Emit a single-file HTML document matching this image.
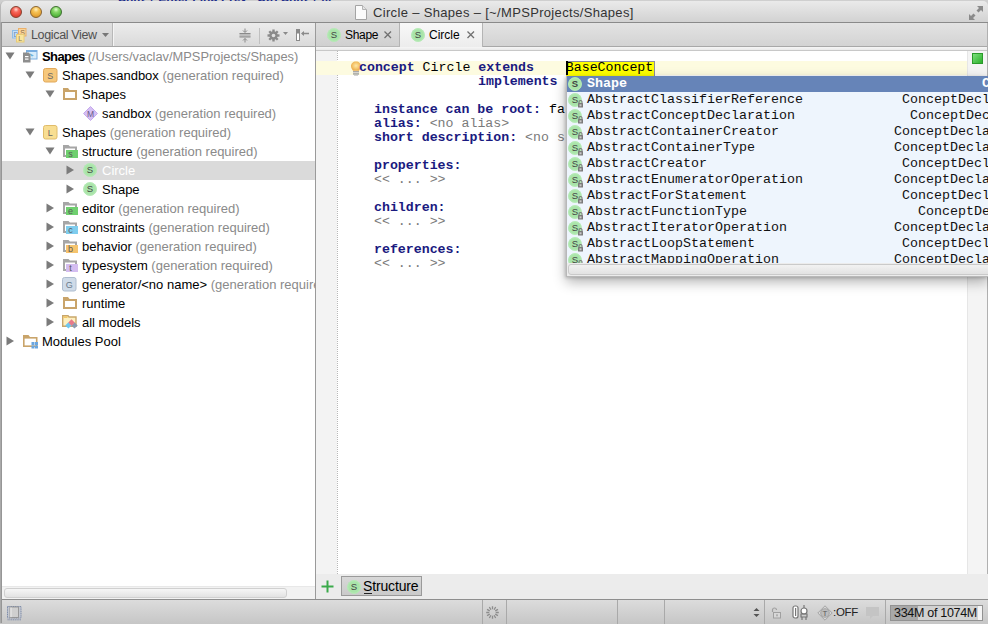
<!DOCTYPE html>
<html><head><meta charset="utf-8">
<style>
*{margin:0;padding:0;box-sizing:border-box}
html,body{width:988px;height:624px;overflow:hidden;background:#cfcfcf;font-family:"Liberation Sans",sans-serif;font-size:13px;color:#000;position:relative}
.a{position:absolute}
#title{position:absolute;left:0;top:1px;width:988px;height:22px;background:linear-gradient(#eaeaea,#d2d2d2);border-bottom:1px solid #8a8a8a;border-radius:5px 5px 0 0;border-left:1px solid #b8b8b8}
.tl{position:absolute;top:5px;width:12px;height:12px;border-radius:50%}
#ttext{position:absolute;left:372px;top:4px;font-size:13px;color:#333;white-space:pre;letter-spacing:0.33px}
#ltb{position:absolute;left:2px;top:23px;width:313px;height:24px;background:linear-gradient(#ececec,#dadada);border-bottom:1px solid #a6a6a6}
#tree{position:absolute;left:2px;top:47px;width:313px;height:540px;background:#fff;overflow:hidden}
.row{position:absolute;left:-2px;width:315px;height:19px;white-space:pre;line-height:19px;font-size:13px}
.g{color:#8a8a8a}
#lscroll{position:absolute;left:2px;top:587px;width:313px;height:12px;background:#f2f2f2}
#divl{position:absolute;left:315px;top:23px;width:1px;height:576px;background:#9a9a9a}
#etb{position:absolute;left:316px;top:23px;width:672px;height:24px;background:linear-gradient(#e3e3e3,#d3d3d3);border-bottom:1px solid #a8a8a8}
.tab{position:absolute;top:0;height:24px;white-space:pre}
#ed{position:absolute;left:316px;top:47px;width:672px;height:527px;background:#fff;overflow:hidden}
.code{position:absolute;font-family:"Liberation Mono",monospace;font-size:13.25px;line-height:14px;white-space:pre;color:#000}
.kw{color:#1a1a80;font-weight:bold}
.gr{color:#7a7a7a}
#popup{position:absolute;left:566px;top:76px;width:422px;height:201px;background:#eef5fd;border-left:1px solid #b8b8b8;border-bottom:1px solid #b8b8b8;box-shadow:0 5px 12px rgba(0,0,0,.3),-1px 1px 3px rgba(0,0,0,.18);overflow:hidden}
.prow{position:absolute;left:0;width:422px;height:16px;font-family:"Liberation Mono",monospace;font-size:13.33px;line-height:16px;white-space:pre;color:#111}
#btabs{position:absolute;left:316px;top:574px;width:672px;height:25px;background:#ececec}
#status{position:absolute;left:0;top:599px;width:988px;height:25px;background:linear-gradient(#dcdcdc,#c6c6c6);border-top:1px solid #8e8e8e}
.sep{position:absolute;top:0;width:1px;height:25px;background:#a9a9a9}
</style></head><body>
<div class="a" style="left:118px;top:0;width:230px;height:2px;color:#1a2a8a;font-size:12px;overflow:hidden"><div style="position:absolute;top:-9px;left:0;font-weight:bold;white-space:pre">Shift + Enter Find Prev   Ctrl Shift + ...</div></div>
<div id="title">
 <div class="tl" style="left:9px;background:radial-gradient(circle at 50% 25%,#ffd8d0 0,#f86a5e 30%,#e84838 65%,#c83028 100%);border:1px solid #86402e"></div>
 <div class="tl" style="left:29px;background:radial-gradient(circle at 50% 25%,#fff0c0 0,#f6c458 30%,#e8a838 65%,#c88420 100%);border:1px solid #8a6430"></div>
 <div class="tl" style="left:49px;background:radial-gradient(circle at 50% 25%,#e0ffd0 0,#8ad86a 30%,#5cbc44 65%,#3a9a2a 100%);border:1px solid #3e6e30"></div>
 <svg class="a" style="left:353px;top:3px" width="14" height="16" viewBox="0 0 14 16"><path d="M1.5 1.5H8.5L12.5 5.5V15.5H1.5Z" fill="#fbfbfb" stroke="#a4a4a4"/><path d="M8.5 1.5V5.5H12.5" fill="#e4e4e4" stroke="#b4b4b4"/></svg>
 <div id="ttext">Circle – Shapes – [~/MPSProjects/Shapes]</div>
 <svg class="a" style="left:967px;top:4px" width="16" height="16" viewBox="0 0 16 16"><path d="M9 1H15V7L13 5L10.5 7.5L8.5 5.5L11 3Z" fill="#8a8a8a"/><path d="M7 15H1V9L3 11L5.5 8.5L7.5 10.5L5 13Z" fill="#8a8a8a"/></svg>
</div>
<div id="ltb">
 <div class="a" style="left:0;top:0;width:111px;height:23px;background:linear-gradient(#e0e0e0,#d0d0d0);border-right:1px solid #b8b8b8;box-shadow:1px 0 0 #f4f4f4"></div>
 <svg class="a" style="left:9px;top:4px" width="18" height="17" viewBox="0 0 18 17"><rect x="1.5" y="3.5" width="7.5" height="7.5" fill="#c4e0fa" stroke="#8fbde8"/><text x="5" y="10" font-family="Liberation Sans" font-size="7" text-anchor="middle" fill="#6a8ab0">D</text><rect x="7.5" y="1.5" width="7.5" height="7.5" fill="#f9d49a" stroke="#eab06a"/><text x="11.5" y="8" font-family="Liberation Sans" font-size="7" text-anchor="middle" fill="#8a6a40">S</text><rect x="5.5" y="7.5" width="7.5" height="7.5" fill="#fae59e" stroke="#e8cc78"/><text x="9.2" y="14" font-family="Liberation Sans" font-size="7" text-anchor="middle" fill="#8a7a50">L</text></svg>
 <div class="a" style="left:29px;top:5px;font-size:12.5px;color:#505050;letter-spacing:-0.35px">Logical View</div>
 <svg class="a" style="left:100px;top:10px" width="8" height="5"><path d="M0 0H7L3.5 4Z" fill="#777"/></svg>
 <svg class="a" style="left:237px;top:5px" width="13" height="15" viewBox="0 0 13 15"><rect x="0.5" y="5.5" width="11" height="3.5" fill="#bcbcbc"/><path d="M0.5 5.5H11.5M0.5 9H11.5" stroke="#8a8a8a"/><path d="M6 0.5V4M4 2.5L6 4.5L8 2.5M6 14.5V10.5M4 12.5L6 10.5L8 12.5" stroke="#8a8a8a" fill="none"/></svg>
 <div class="a" style="left:257px;top:5px;width:1px;height:16px;background:#c0c0c0"></div>
 <svg class="a" style="left:265px;top:6px" width="14" height="14" viewBox="0 0 14 14"><g fill="#8a8a8a"><circle cx="6.5" cy="6.5" r="4.2"/><rect x="5.3" y="0.5" width="2.4" height="12"/><rect x="0.5" y="5.3" width="12" height="2.4"/><rect x="5.3" y="0.5" width="2.4" height="12" transform="rotate(45 6.5 6.5)"/><rect x="5.3" y="0.5" width="2.4" height="12" transform="rotate(-45 6.5 6.5)"/></g><circle cx="6.5" cy="6.5" r="1.8" fill="#e0e0e0"/></svg>
 <svg class="a" style="left:281px;top:9px" width="6" height="4"><path d="M0 0H5L2.5 3Z" fill="#8a8a8a"/></svg>
 <svg class="a" style="left:293px;top:6px" width="16" height="13" viewBox="0 0 16 13"><rect x="1.5" y="0.5" width="3" height="11" fill="#fff" stroke="#8a8a8a"/><rect x="1.5" y="0.5" width="3" height="4" fill="#8a8a8a"/><path d="M7 4.5H14" stroke="#8a8a8a" stroke-width="1.5"/><path d="M6 4.5L9 2V7Z" fill="#8a8a8a"/></svg>
</div>
<div id="tree">
<div class="row" style="top:0px"><svg class="a" style="left:5px;top:5px" width="10" height="8"><path d="M0.5 0.5H9.5L5 7.5Z" fill="#7b7b7b"/></svg><svg class="a" style="left:22px;top:2px" width="17" height="16" viewBox="0 0 17 16"><rect x="4.5" y="1.5" width="10.5" height="8.5" fill="#d8ecfa" stroke="#7aaee0"/><rect x="4.5" y="1.5" width="10.5" height="1.5" fill="#7aaee0"/><path d="M8 4.5L12 6.5L10 7L11 9L8 5Z" fill="#5ab0e0"/><path d="M1 3.5H6.5L8.5 5.5V13.5H1Z" fill="#8e8e8e"/><rect x="3" y="7" width="3.5" height="1.2" fill="#fff"/><rect x="3" y="9.5" width="3.5" height="1.2" fill="#fff"/></svg><span class="a" style="left:42px;top:0;color:#000;font-weight:bold;letter-spacing:-0.6px">Shapes <span class="g" style="font-weight:normal;letter-spacing:0;font-size:12.85px">(/Users/vaclav/MPSProjects/Shapes)</span></span></div>
<div class="row" style="top:19px"><svg class="a" style="left:25px;top:5px" width="10" height="8"><path d="M0.5 0.5H9.5L5 7.5Z" fill="#7b7b7b"/></svg><svg class="a" style="left:43px;top:2px" width="15" height="15" viewBox="0 0 15 15"><rect x="0.5" y="0.5" width="13.5" height="13.5" rx="2" fill="#f6c87c" stroke="#e2a95a"/><text x="7.2" y="11" font-family="Liberation Sans" font-size="9" text-anchor="middle" fill="#666">S</text></svg><span class="a" style="left:62px;top:0;color:#000">Shapes.sandbox <span class="g" style="font-weight:normal;letter-spacing:0">(generation required)</span></span></div>
<div class="row" style="top:38px"><svg class="a" style="left:45px;top:5px" width="10" height="8"><path d="M0.5 0.5H9.5L5 7.5Z" fill="#7b7b7b"/></svg><svg class="a" style="left:62px;top:2px" width="16" height="14" viewBox="0 0 16 14"><path d="M1 1h5l1.5 2H15V13H1Z" fill="#c9a46a"/><rect x="3" y="5" width="10" height="6" fill="#fff"/></svg><span class="a" style="left:82px;top:0;color:#000">Shapes</span></div>
<div class="row" style="top:57px"><svg class="a" style="left:83px;top:2px" width="16" height="16" viewBox="0 0 16 16"><path d="M7.5 0.5L14.5 7.5L7.5 14.5L0.5 7.5Z" fill="#d6c0f4" stroke="#c4a8ec"/><text x="7.5" y="10.8" font-family="Liberation Sans" font-size="8.5" text-anchor="middle" fill="#6a5a88">M</text></svg><span class="a" style="left:102px;top:0;color:#000">sandbox <span class="g" style="font-weight:normal;letter-spacing:0">(generation required)</span></span></div>
<div class="row" style="top:76px"><svg class="a" style="left:25px;top:5px" width="10" height="8"><path d="M0.5 0.5H9.5L5 7.5Z" fill="#7b7b7b"/></svg><svg class="a" style="left:43px;top:2px" width="15" height="15" viewBox="0 0 15 15"><rect x="0.5" y="0.5" width="13.5" height="13.5" rx="2" fill="#f8de92" stroke="#e0bc6a"/><text x="7.2" y="11" font-family="Liberation Sans" font-size="9" text-anchor="middle" fill="#666">L</text></svg><span class="a" style="left:62px;top:0;color:#000">Shapes <span class="g" style="font-weight:normal;letter-spacing:0">(generation required)</span></span></div>
<div class="row" style="top:95px"><svg class="a" style="left:45px;top:5px" width="10" height="8"><path d="M0.5 0.5H9.5L5 7.5Z" fill="#7b7b7b"/></svg><svg class="a" style="left:63px;top:3px" width="17" height="15" viewBox="0 0 17 15"><path d="M0 0h5.5l1.5 1.5H14v3.5H12V3.5H2V10H3V12H0Z" fill="#a6a6a6"/><rect x="3" y="5" width="12" height="8" fill="#6fd06f"/><text x="7.5" y="12" font-family="Liberation Sans" font-size="9" text-anchor="middle" fill="#5a5a5a">s</text></svg><span class="a" style="left:82px;top:0;color:#000">structure <span class="g" style="font-weight:normal;letter-spacing:0">(generation required)</span></span></div>
<div class="row" style="top:114px;background:#dadada"><svg class="a" style="left:66px;top:4px" width="9" height="10"><path d="M0.5 0.5V9.5L8 5Z" fill="#7b7b7b"/></svg><svg class="a" style="left:83px;top:2px" width="16" height="16" viewBox="0 0 16 16"><circle cx="7" cy="7" r="6.8" fill="#a9e4a9"/><circle cx="7" cy="7" r="6.3" fill="none" stroke="#b9ecb9" stroke-width="1"/><text x="7" y="10.2" font-family="Liberation Sans" font-size="9.5" text-anchor="middle" fill="#444">S</text></svg><span class="a" style="left:102px;top:0;color:#fff">Circle</span></div>
<div class="row" style="top:133px"><svg class="a" style="left:66px;top:4px" width="9" height="10"><path d="M0.5 0.5V9.5L8 5Z" fill="#7b7b7b"/></svg><svg class="a" style="left:83px;top:2px" width="16" height="16" viewBox="0 0 16 16"><circle cx="7" cy="7" r="6.8" fill="#a9e4a9"/><circle cx="7" cy="7" r="6.3" fill="none" stroke="#b9ecb9" stroke-width="1"/><text x="7" y="10.2" font-family="Liberation Sans" font-size="9.5" text-anchor="middle" fill="#444">S</text></svg><span class="a" style="left:102px;top:0;color:#000">Shape</span></div>
<div class="row" style="top:152px"><svg class="a" style="left:46px;top:4px" width="9" height="10"><path d="M0.5 0.5V9.5L8 5Z" fill="#7b7b7b"/></svg><svg class="a" style="left:63px;top:3px" width="17" height="15" viewBox="0 0 17 15"><path d="M0 0h5.5l1.5 1.5H14v3.5H12V3.5H2V10H3V12H0Z" fill="#a6a6a6"/><rect x="3" y="5" width="12" height="8" fill="#6fd06f"/><text x="7.5" y="12" font-family="Liberation Sans" font-size="9" text-anchor="middle" fill="#5a5a5a">e</text></svg><span class="a" style="left:82px;top:0;color:#000">editor <span class="g" style="font-weight:normal;letter-spacing:0">(generation required)</span></span></div>
<div class="row" style="top:171px"><svg class="a" style="left:46px;top:4px" width="9" height="10"><path d="M0.5 0.5V9.5L8 5Z" fill="#7b7b7b"/></svg><svg class="a" style="left:63px;top:3px" width="17" height="15" viewBox="0 0 17 15"><path d="M0 0h5.5l1.5 1.5H14v3.5H12V3.5H2V10H3V12H0Z" fill="#a6a6a6"/><rect x="3" y="5" width="12" height="8" fill="#7fcdee"/><text x="7.5" y="12" font-family="Liberation Sans" font-size="9" text-anchor="middle" fill="#5a5a5a">c</text></svg><span class="a" style="left:82px;top:0;color:#000">constraints <span class="g" style="font-weight:normal;letter-spacing:0">(generation required)</span></span></div>
<div class="row" style="top:190px"><svg class="a" style="left:46px;top:4px" width="9" height="10"><path d="M0.5 0.5V9.5L8 5Z" fill="#7b7b7b"/></svg><svg class="a" style="left:63px;top:3px" width="17" height="15" viewBox="0 0 17 15"><path d="M0 0h5.5l1.5 1.5H14v3.5H12V3.5H2V10H3V12H0Z" fill="#a6a6a6"/><rect x="3" y="5" width="12" height="8" fill="#f5c46e"/><text x="7.5" y="12" font-family="Liberation Sans" font-size="9" text-anchor="middle" fill="#5a5a5a">b</text></svg><span class="a" style="left:82px;top:0;color:#000">behavior <span class="g" style="font-weight:normal;letter-spacing:0">(generation required)</span></span></div>
<div class="row" style="top:209px"><svg class="a" style="left:46px;top:4px" width="9" height="10"><path d="M0.5 0.5V9.5L8 5Z" fill="#7b7b7b"/></svg><svg class="a" style="left:63px;top:3px" width="17" height="15" viewBox="0 0 17 15"><path d="M0 0h5.5l1.5 1.5H14v3.5H12V3.5H2V10H3V12H0Z" fill="#a6a6a6"/><rect x="3" y="5" width="12" height="8" fill="#d4bdf0"/><text x="7.5" y="12" font-family="Liberation Sans" font-size="9" text-anchor="middle" fill="#5a5a5a">t</text></svg><span class="a" style="left:82px;top:0;color:#000">typesystem <span class="g" style="font-weight:normal;letter-spacing:0">(generation required)</span></span></div>
<div class="row" style="top:228px"><svg class="a" style="left:46px;top:4px" width="9" height="10"><path d="M0.5 0.5V9.5L8 5Z" fill="#7b7b7b"/></svg><svg class="a" style="left:62px;top:2px" width="15" height="15" viewBox="0 0 15 15"><rect x="0.5" y="0.5" width="13.5" height="13.5" rx="2" fill="#cfdbe8" stroke="#aebdd0"/><text x="7.2" y="11" font-family="Liberation Sans" font-size="9" text-anchor="middle" fill="#6a7a8a">G</text></svg><span class="a" style="left:82px;top:0;color:#000">generator/&lt;no name&gt; <span class="g" style="font-weight:normal;letter-spacing:0">(generation required)</span></span></div>
<div class="row" style="top:247px"><svg class="a" style="left:46px;top:4px" width="9" height="10"><path d="M0.5 0.5V9.5L8 5Z" fill="#7b7b7b"/></svg><svg class="a" style="left:62px;top:2px" width="16" height="14" viewBox="0 0 16 14"><path d="M1 1h5l1.5 2H15V13H1Z" fill="#c9a46a"/><rect x="3" y="5" width="10" height="6" fill="#fff"/></svg><span class="a" style="left:82px;top:0;color:#000">runtime</span></div>
<div class="row" style="top:266px"><svg class="a" style="left:46px;top:4px" width="9" height="10"><path d="M0.5 0.5V9.5L8 5Z" fill="#7b7b7b"/></svg><svg class="a" style="left:62px;top:2px" width="17" height="16" viewBox="0 0 17 16"><path d="M0.7 0.7H6L7 2H14V11.3H0.7Z" fill="#fdf0c0" stroke="#c9a66a" stroke-width="1.4"/><rect x="1.5" y="1.5" width="4" height="1.5" fill="#f5c860"/><path d="M6.4 7.2L9.6 10.4L6.4 13.6L3.2 10.4Z" fill="#6ec6ee"/><path d="M12.5 7.2L15.7 10.4L12.5 13.6L9.3 10.4Z" fill="#8c9ab0"/><path d="M9.5 4.3L12.7 7.5L9.5 10.7L6.3 7.5Z" fill="#e87a8a"/></svg><span class="a" style="left:82px;top:0;color:#000">all models</span></div>
<div class="row" style="top:285px"><svg class="a" style="left:6px;top:4px" width="9" height="10"><path d="M0.5 0.5V9.5L8 5Z" fill="#7b7b7b"/></svg><svg class="a" style="left:23px;top:3px" width="17" height="16" viewBox="0 0 17 16"><path d="M0 0h5.5l1.5 2H14.5V12H0Z" fill="#c9a46a"/><rect x="1.6" y="3.6" width="11.3" height="6.8" fill="#fff"/><rect x="8.5" y="7" width="3" height="3" fill="#6aa6e0"/><rect x="12" y="7" width="3" height="3" fill="#6aa6e0"/><rect x="8.5" y="10.5" width="3" height="3" fill="#6aa6e0"/><rect x="12" y="10.5" width="3" height="3" fill="#6aa6e0"/></svg><span class="a" style="left:42px;top:0;color:#000">Modules Pool</span></div>
</div>
<div id="lscroll"><div class="a" style="left:2px;top:1px;width:283px;height:10px;border-radius:3px;background:linear-gradient(#f6f6f6,#e2e2e2);border:1px solid #d0d0d0"></div></div>
<div id="divl"></div>
<div id="etb">
 <div class="tab" style="left:0;width:84px;background:linear-gradient(#dedede,#d0d0d0);border-right:1px solid #b4b4b4;border-bottom:1px solid #b8b8b8"><svg class="a" style="left:11px;top:5px" width="16" height="16" viewBox="0 0 16 16"><circle cx="7" cy="7" r="6.8" fill="#a9e4a9"/><circle cx="7" cy="7" r="6.3" fill="none" stroke="#b9ecb9" stroke-width="1"/><text x="7" y="10.2" font-family="Liberation Sans" font-size="9.5" text-anchor="middle" fill="#444">S</text></svg><span class="a" style="left:29px;top:5px;font-size:12px;letter-spacing:-0.3px">Shape</span><svg class="a" style="left:68px;top:8px" width="8" height="8"><path d="M0.5 0.5L7 7M7 0.5L0.5 7" stroke="#707070" stroke-width="1.3"/></svg></div>
 <div class="tab" style="left:84px;width:83px;height:25px;background:linear-gradient(#f8f8f8,#ececec);border-right:1px solid #b4b4b4"><svg class="a" style="left:11px;top:5px" width="16" height="16" viewBox="0 0 16 16"><circle cx="7" cy="7" r="6.8" fill="#a9e4a9"/><circle cx="7" cy="7" r="6.3" fill="none" stroke="#b9ecb9" stroke-width="1"/><text x="7" y="10.2" font-family="Liberation Sans" font-size="9.5" text-anchor="middle" fill="#444">S</text></svg><span class="a" style="left:29px;top:5px;font-size:12px">Circle</span><svg class="a" style="left:67px;top:8px" width="8" height="8"><path d="M0.5 0.5L7 7M7 0.5L0.5 7" stroke="#707070" stroke-width="1.3"/></svg></div>
</div>
<div id="ed">
 <div class="a" style="left:0;top:0;width:672px;height:3px;background:linear-gradient(#f6f6f6,#eaeaea)"></div><div class="a" style="left:0;top:3px;width:672px;height:1px;background:#c8c8c8"></div>
 <div class="a" style="left:0;top:4px;width:21px;height:523px;background:#f3f3f3"></div>
 <div class="a" style="left:21px;top:4px;width:0;height:523px;border-left:1px dotted #b8b8b8"></div>
 <div class="a" style="left:0;top:14px;width:651px;height:14px;background:#fdfbe0"></div>
 <div class="a" style="left:651px;top:4px;width:21px;height:523px;background:#f4f4f4;border-left:1px solid #e6e6e6"></div>
 <div class="a" style="left:656px;top:6px;width:11px;height:11px;background:linear-gradient(135deg,#7ce07c,#2cb02c);border:1px solid #2a9a2a"></div>
 <svg class="a" style="left:34px;top:13px" width="13" height="17" viewBox="0 0 13 17"><defs><radialGradient id="bg1" cx="50%" cy="45%" r="55%"><stop offset="0" stop-color="#fde7a8"/><stop offset="0.6" stop-color="#f5c56a"/><stop offset="1" stop-color="#e9a84a"/></radialGradient></defs><path d="M6 1.5C3 1.5 1 3.6 1 6.3C1 8.3 2.4 9.4 3 10.8H9C9.6 9.4 11 8.3 11 6.3C11 3.6 9 1.5 6 1.5Z" fill="url(#bg1)"/><rect x="3" y="11" width="6" height="1.3" fill="#a8a8a8"/><rect x="3" y="12.3" width="6" height="1" fill="#d0d0d0"/><rect x="3" y="13.3" width="6" height="1.3" fill="#9a9a9a"/><rect x="4" y="14.6" width="4" height="1" fill="#b8b8b8"/></svg>
 <div class="a" style="left:250px;top:14px;width:89px;height:15px;background:#ffff00;border-top:1px solid #8c8ca0;border-right:1px solid #8c8ca0"></div>
 <div class="code" style="left:43px;top:14px"><span class="kw">concept</span> Circle <span class="kw">extends</span>    BaseConcept</div>
 <div class="a" style="left:250px;top:14px;width:1.5px;height:14px;background:#000"></div>
 <div class="code" style="left:162px;top:28px"><span class="kw">implements</span></div>
 <div class="code" style="left:58px;top:56px"><span class="kw">instance can be root:</span> fa
<span class="kw">alias:</span> <span class="gr">&lt;no alias&gt;</span>
<span class="kw">short description:</span> <span class="gr">&lt;no s</span>

<span class="kw">properties:</span>
<span class="gr">&lt;&lt; ... &gt;&gt;</span>

<span class="kw">children:</span>
<span class="gr">&lt;&lt; ... &gt;&gt;</span>

<span class="kw">references:</span>
<span class="gr">&lt;&lt; ... &gt;&gt;</span></div>
</div>
<div class="a" style="left:987px;top:23px;width:1px;height:576px;background:#b0b0b0"></div>
<div id="popup">
<div class="prow" style="top:0;background:#6684b8;color:#fff;font-weight:bold"><svg class="a" style="left:1px;top:1px" width="16" height="16" viewBox="0 0 16 16"><circle cx="7" cy="7" r="6.8" fill="#a9e4a9"/><circle cx="7" cy="7" r="6.3" fill="none" stroke="#b9ecb9" stroke-width="1"/><text x="7" y="10.2" font-family="Liberation Sans" font-size="9.5" text-anchor="middle" fill="#444">S</text></svg><span class="a" style="left:20px">Shape</span><span class="a" style="left:415px">C</span></div>
<div class="prow" style="top:16px"><svg class="a" style="left:1px;top:1px" width="16" height="16" viewBox="0 0 16 16"><circle cx="7" cy="7" r="6.8" fill="#a9e4a9"/><circle cx="7" cy="7" r="6.3" fill="none" stroke="#b9ecb9" stroke-width="1"/><text x="7" y="10.2" font-family="Liberation Sans" font-size="9.5" text-anchor="middle" fill="#444">S</text><rect x="10" y="10" width="5" height="4.5" rx="0.5" fill="#7a7a7a"/><rect x="11.5" y="11.3" width="2" height="2" fill="#c8c8c8"/><path d="M11 10.2V9a1.5 1.5 0 0 1 3 0v1.2" fill="none" stroke="#7a7a7a" stroke-width="1.1"/></svg><span class="a" style="left:20px">AbstractClassifierReference</span><span class="a" style="left:335px">ConceptDeclaration</span></div>
<div class="prow" style="top:32px"><svg class="a" style="left:1px;top:1px" width="16" height="16" viewBox="0 0 16 16"><circle cx="7" cy="7" r="6.8" fill="#a9e4a9"/><circle cx="7" cy="7" r="6.3" fill="none" stroke="#b9ecb9" stroke-width="1"/><text x="7" y="10.2" font-family="Liberation Sans" font-size="9.5" text-anchor="middle" fill="#444">S</text><rect x="10" y="10" width="5" height="4.5" rx="0.5" fill="#7a7a7a"/><rect x="11.5" y="11.3" width="2" height="2" fill="#c8c8c8"/><path d="M11 10.2V9a1.5 1.5 0 0 1 3 0v1.2" fill="none" stroke="#7a7a7a" stroke-width="1.1"/></svg><span class="a" style="left:20px">AbstractConceptDeclaration</span><span class="a" style="left:343px">ConceptDeclaration</span></div>
<div class="prow" style="top:48px"><svg class="a" style="left:1px;top:1px" width="16" height="16" viewBox="0 0 16 16"><circle cx="7" cy="7" r="6.8" fill="#a9e4a9"/><circle cx="7" cy="7" r="6.3" fill="none" stroke="#b9ecb9" stroke-width="1"/><text x="7" y="10.2" font-family="Liberation Sans" font-size="9.5" text-anchor="middle" fill="#444">S</text><rect x="10" y="10" width="5" height="4.5" rx="0.5" fill="#7a7a7a"/><rect x="11.5" y="11.3" width="2" height="2" fill="#c8c8c8"/><path d="M11 10.2V9a1.5 1.5 0 0 1 3 0v1.2" fill="none" stroke="#7a7a7a" stroke-width="1.1"/></svg><span class="a" style="left:20px">AbstractContainerCreator</span><span class="a" style="left:327px">ConceptDeclaration</span></div>
<div class="prow" style="top:64px"><svg class="a" style="left:1px;top:1px" width="16" height="16" viewBox="0 0 16 16"><circle cx="7" cy="7" r="6.8" fill="#a9e4a9"/><circle cx="7" cy="7" r="6.3" fill="none" stroke="#b9ecb9" stroke-width="1"/><text x="7" y="10.2" font-family="Liberation Sans" font-size="9.5" text-anchor="middle" fill="#444">S</text><rect x="10" y="10" width="5" height="4.5" rx="0.5" fill="#7a7a7a"/><rect x="11.5" y="11.3" width="2" height="2" fill="#c8c8c8"/><path d="M11 10.2V9a1.5 1.5 0 0 1 3 0v1.2" fill="none" stroke="#7a7a7a" stroke-width="1.1"/></svg><span class="a" style="left:20px">AbstractContainerType</span><span class="a" style="left:327px">ConceptDeclaration</span></div>
<div class="prow" style="top:80px"><svg class="a" style="left:1px;top:1px" width="16" height="16" viewBox="0 0 16 16"><circle cx="7" cy="7" r="6.8" fill="#a9e4a9"/><circle cx="7" cy="7" r="6.3" fill="none" stroke="#b9ecb9" stroke-width="1"/><text x="7" y="10.2" font-family="Liberation Sans" font-size="9.5" text-anchor="middle" fill="#444">S</text><rect x="10" y="10" width="5" height="4.5" rx="0.5" fill="#7a7a7a"/><rect x="11.5" y="11.3" width="2" height="2" fill="#c8c8c8"/><path d="M11 10.2V9a1.5 1.5 0 0 1 3 0v1.2" fill="none" stroke="#7a7a7a" stroke-width="1.1"/></svg><span class="a" style="left:20px">AbstractCreator</span><span class="a" style="left:335px">ConceptDeclaration</span></div>
<div class="prow" style="top:96px"><svg class="a" style="left:1px;top:1px" width="16" height="16" viewBox="0 0 16 16"><circle cx="7" cy="7" r="6.8" fill="#a9e4a9"/><circle cx="7" cy="7" r="6.3" fill="none" stroke="#b9ecb9" stroke-width="1"/><text x="7" y="10.2" font-family="Liberation Sans" font-size="9.5" text-anchor="middle" fill="#444">S</text><rect x="10" y="10" width="5" height="4.5" rx="0.5" fill="#7a7a7a"/><rect x="11.5" y="11.3" width="2" height="2" fill="#c8c8c8"/><path d="M11 10.2V9a1.5 1.5 0 0 1 3 0v1.2" fill="none" stroke="#7a7a7a" stroke-width="1.1"/></svg><span class="a" style="left:20px">AbstractEnumeratorOperation</span><span class="a" style="left:327px">ConceptDeclaration</span></div>
<div class="prow" style="top:112px"><svg class="a" style="left:1px;top:1px" width="16" height="16" viewBox="0 0 16 16"><circle cx="7" cy="7" r="6.8" fill="#a9e4a9"/><circle cx="7" cy="7" r="6.3" fill="none" stroke="#b9ecb9" stroke-width="1"/><text x="7" y="10.2" font-family="Liberation Sans" font-size="9.5" text-anchor="middle" fill="#444">S</text><rect x="10" y="10" width="5" height="4.5" rx="0.5" fill="#7a7a7a"/><rect x="11.5" y="11.3" width="2" height="2" fill="#c8c8c8"/><path d="M11 10.2V9a1.5 1.5 0 0 1 3 0v1.2" fill="none" stroke="#7a7a7a" stroke-width="1.1"/></svg><span class="a" style="left:20px">AbstractForStatement</span><span class="a" style="left:335px">ConceptDeclaration</span></div>
<div class="prow" style="top:128px"><svg class="a" style="left:1px;top:1px" width="16" height="16" viewBox="0 0 16 16"><circle cx="7" cy="7" r="6.8" fill="#a9e4a9"/><circle cx="7" cy="7" r="6.3" fill="none" stroke="#b9ecb9" stroke-width="1"/><text x="7" y="10.2" font-family="Liberation Sans" font-size="9.5" text-anchor="middle" fill="#444">S</text><rect x="10" y="10" width="5" height="4.5" rx="0.5" fill="#7a7a7a"/><rect x="11.5" y="11.3" width="2" height="2" fill="#c8c8c8"/><path d="M11 10.2V9a1.5 1.5 0 0 1 3 0v1.2" fill="none" stroke="#7a7a7a" stroke-width="1.1"/></svg><span class="a" style="left:20px">AbstractFunctionType</span><span class="a" style="left:351px">ConceptDeclaration</span></div>
<div class="prow" style="top:144px"><svg class="a" style="left:1px;top:1px" width="16" height="16" viewBox="0 0 16 16"><circle cx="7" cy="7" r="6.8" fill="#a9e4a9"/><circle cx="7" cy="7" r="6.3" fill="none" stroke="#b9ecb9" stroke-width="1"/><text x="7" y="10.2" font-family="Liberation Sans" font-size="9.5" text-anchor="middle" fill="#444">S</text><rect x="10" y="10" width="5" height="4.5" rx="0.5" fill="#7a7a7a"/><rect x="11.5" y="11.3" width="2" height="2" fill="#c8c8c8"/><path d="M11 10.2V9a1.5 1.5 0 0 1 3 0v1.2" fill="none" stroke="#7a7a7a" stroke-width="1.1"/></svg><span class="a" style="left:20px">AbstractIteratorOperation</span><span class="a" style="left:327px">ConceptDeclaration</span></div>
<div class="prow" style="top:160px"><svg class="a" style="left:1px;top:1px" width="16" height="16" viewBox="0 0 16 16"><circle cx="7" cy="7" r="6.8" fill="#a9e4a9"/><circle cx="7" cy="7" r="6.3" fill="none" stroke="#b9ecb9" stroke-width="1"/><text x="7" y="10.2" font-family="Liberation Sans" font-size="9.5" text-anchor="middle" fill="#444">S</text><rect x="10" y="10" width="5" height="4.5" rx="0.5" fill="#7a7a7a"/><rect x="11.5" y="11.3" width="2" height="2" fill="#c8c8c8"/><path d="M11 10.2V9a1.5 1.5 0 0 1 3 0v1.2" fill="none" stroke="#7a7a7a" stroke-width="1.1"/></svg><span class="a" style="left:20px">AbstractLoopStatement</span><span class="a" style="left:335px">ConceptDeclaration</span></div>
<div class="prow" style="top:176px"><svg class="a" style="left:1px;top:1px" width="16" height="16" viewBox="0 0 16 16"><circle cx="7" cy="7" r="6.8" fill="#a9e4a9"/><circle cx="7" cy="7" r="6.3" fill="none" stroke="#b9ecb9" stroke-width="1"/><text x="7" y="10.2" font-family="Liberation Sans" font-size="9.5" text-anchor="middle" fill="#444">S</text><rect x="10" y="10" width="5" height="4.5" rx="0.5" fill="#7a7a7a"/><rect x="11.5" y="11.3" width="2" height="2" fill="#c8c8c8"/><path d="M11 10.2V9a1.5 1.5 0 0 1 3 0v1.2" fill="none" stroke="#7a7a7a" stroke-width="1.1"/></svg><span class="a" style="left:20px">AbstractMappingOperation</span><span class="a" style="left:327px">ConceptDeclaration</span></div>
 <div class="a" style="left:0;top:187px;width:422px;height:14px;background:#ececec"><div class="a" style="left:1px;top:1px;width:424px;height:11px;border-radius:3px;background:linear-gradient(#f2f2f2,#e2e2e2);border:1px solid #cacaca"></div></div>
</div>
<div id="btabs">
 <svg class="a" style="left:5px;top:6px" width="13" height="13" viewBox="0 0 13 13"><path d="M6.5 0.5V12.5M0.5 6.5H12.5" stroke="#3aaa4a" stroke-width="2"/></svg>
 <div class="a" style="left:25px;top:2px;width:81px;height:20px;background:linear-gradient(#d8d8d8,#cacaca);border:1px solid #9a9a9a"><svg class="a" style="left:5px;top:3px" width="16" height="16" viewBox="0 0 16 16"><circle cx="7" cy="7" r="6.8" fill="#a9e4a9"/><circle cx="7" cy="7" r="6.3" fill="none" stroke="#b9ecb9" stroke-width="1"/><text x="7" y="10.2" font-family="Liberation Sans" font-size="9.5" text-anchor="middle" fill="#444">S</text></svg><span class="a" style="left:21px;top:1px;font-size:14px;letter-spacing:-0.15px">Structure</span><div class="a" style="left:22px;top:16px;width:8px;height:1px;background:#222"></div></div>
</div>
<div id="lbottom" class="a" style="left:2px;top:586px;width:313px;height:1px;background:#e8e8e8"></div>
<div id="status">
 <svg class="a" style="left:7px;top:6px" width="15" height="15" viewBox="0 0 15 15"><rect x="0.5" y="0.5" width="13.5" height="11.5" fill="#c4c8d0" stroke="#7c8aa8" stroke-dasharray="1.2 0.6"/><rect x="3" y="1" width="8.5" height="10.5" fill="#cfcfcf" stroke="#8a8a8a" stroke-width="0.8"/><rect x="3.4" y="1.4" width="1" height="9.8" fill="#f4f4f4"/><path d="M0.5 13.8H14" stroke="#7c8aa8" stroke-dasharray="1.2 0.6"/></svg>
 <div class="sep" style="left:482px"></div>
 <svg class="a" style="left:485px;top:5px" width="15" height="15" viewBox="0 0 15 15"><path d="M10.70 7.50L13.80 7.50M10.27 9.10L12.96 10.65M9.10 10.27L10.65 12.96M7.50 10.70L7.50 13.80M5.90 10.27L4.35 12.96M4.73 9.10L2.04 10.65M4.30 7.50L1.20 7.50M4.73 5.90L2.04 4.35M5.90 4.73L4.35 2.04M7.50 4.30L7.50 1.20M9.10 4.73L10.65 2.04M10.27 5.90L12.96 4.35" stroke="#8c8c8c" stroke-width="1.3"/></svg>
 <div class="sep" style="left:506px"></div>
 <div class="sep" style="left:617px"></div>
 <div class="sep" style="left:664px"></div>
 <svg class="a" style="left:753px;top:7px" width="7" height="11"><path d="M0.5 4L3.5 1L6.5 4ZM0.5 7L3.5 10L6.5 7Z" fill="#555"/></svg>
 <div class="sep" style="left:764px"></div>
 <svg class="a" style="left:770px;top:7px" width="12" height="12" viewBox="0 0 12 12"><path d="M2.5 5V3a2 2 0 0 1 4 0" fill="none" stroke="#a0a0a0" stroke-width="1.2"/><rect x="3.5" y="5.5" width="7" height="5.5" fill="#d8d8d8" stroke="#a0a0a0"/><rect x="6.3" y="7.3" width="1.4" height="2" fill="#a0a0a0"/></svg>
 <svg class="a" style="left:792px;top:4px" width="18" height="17" viewBox="0 0 18 17"><rect x="1" y="2" width="5" height="12" rx="2" fill="#fff" stroke="#777" stroke-width="1.2"/><rect x="3" y="4" width="1.2" height="8" fill="#777"/><circle cx="12" cy="7" r="3" fill="#fff" stroke="#777" stroke-width="1.2"/><path d="M12 1V4M9 10H15V13H9ZM10 13V16M14 13V16" stroke="#777" fill="none" stroke-width="1.2"/></svg>
 <svg class="a" style="left:817px;top:5px" width="16" height="16" viewBox="0 0 16 16"><path d="M8 0.8L15.2 8L8 15.2L0.8 8Z" fill="#d6d6d6" stroke="#a4a4a4"/><circle cx="8" cy="8" r="4.3" fill="#bdbdbd" stroke="#9a9a9a" stroke-width="0.8"/><text x="8" y="11" font-family="Liberation Sans" font-size="8" text-anchor="middle" fill="#5a5a5a">T</text></svg>
 <div class="a" style="left:833px;top:6px;font-size:11.5px;color:#222;letter-spacing:-0.3px">:OFF</div>
 <svg class="a" style="left:865px;top:6px" width="15" height="14" viewBox="0 0 15 14"><path d="M1 1H14V10H8L5 13V10H1Z" fill="#c4c4c4"/></svg>
 <div class="sep" style="left:885px"></div>
 <div class="a" style="left:890px;top:5px;width:93px;height:16px;background:#f4f4f4;border:1px solid #929292;overflow:hidden"><div class="a" style="left:0;top:0;width:27px;height:14px;background:#a8a8a8"></div><div class="a" style="left:27px;top:0;width:60px;height:14px;background:#d2d2d2"></div><div class="a" style="left:3px;top:0px;font-size:12.5px;color:#111;letter-spacing:-0.3px;white-space:pre">334M of 1074M</div></div>
</div>
<div class="a" style="left:0;top:22px;width:2px;height:601px;background:linear-gradient(90deg,#b4b4b4,#8c8c8c)"></div>
</body></html>
